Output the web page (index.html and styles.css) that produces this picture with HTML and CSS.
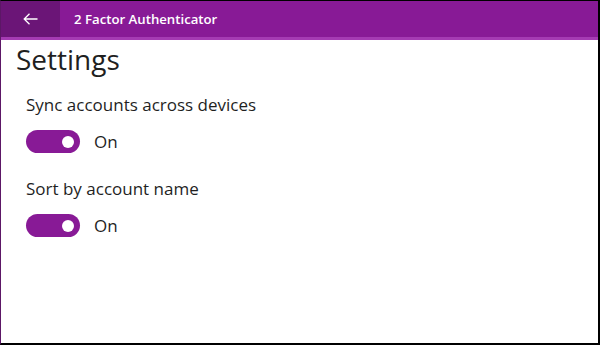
FILE: index.html
```html
<!DOCTYPE html>
<html lang="en">
<head>
    <meta charset="UTF-8">
    <title>2 Factor Authenticator - Settings</title>
    <link rel="stylesheet" href="styles.css">
</head>
<body>
    <div class="window">
        <div class="titlebar">
            <div class="back">
                <svg width="15" height="12" viewBox="0 0 15 12">
                    <path d="M14.5 6H1.2M6.5 0.8L1.2 6l5.3 5.2" fill="none" stroke="#fff" stroke-width="1.3"/>
                </svg>
            </div>
            <div class="app-title">2 Factor Authenticator</div>
        </div>
        <div class="content">
            <h1>Settings</h1>
            <div class="setting">
                <div class="label">Sync accounts across devices</div>
                <div class="toggle-row">
                    <span class="toggle"><span class="knob"></span></span>
                    <span class="state">On</span>
                </div>
            </div>
            <div class="setting">
                <div class="label">Sort by account name</div>
                <div class="toggle-row">
                    <span class="toggle"><span class="knob"></span></span>
                    <span class="state">On</span>
                </div>
            </div>
        </div>
    </div>
</body>
</html>
```

FILE: styles.css
```css
html, body {
    margin: 0;
    height: 100%;
}
body {
    font-family: "Open Sans", "Noto Sans", sans-serif;
    background-color: #fff;
}
.window {
    box-sizing: border-box;
    height: 345px;
    border-top: 1px solid #000;
    border-right: 2px solid #000;
    border-bottom: 2px solid #000;
    border-left: 1px solid #5c1766;
    display: flex;
    flex-direction: column;
}
.titlebar {
    display: flex;
    align-items: center;
    height: 36px;
    background-color: #881a96;
    border-bottom: 3px solid #a53bb3;
}
.back {
    width: 59px;
    height: 100%;
    background-color: #6b1577;
    display: flex;
    align-items: center;
    justify-content: center;
}
.back svg {
    margin-top: -1px;
}
.app-title {
    color: #fff;
    font-size: 13.2px;
    font-weight: 600;
    margin-left: 14px;
    margin-top: -1px;
}
.content {
    padding: 0 0 0 15px;
}
h1 {
    font-size: 28px;
    font-weight: 400;
    color: #1f1f1f;
    margin: 3px 0 0 0;
    line-height: 32px;
}
.setting {
    padding-left: 10px;
}
.label {
    font-size: 17px;
    color: #1f1f1f;
    line-height: 22px;
    margin-top: 19px;
}
.setting + .setting .label {
    margin-top: 25px;
}
.toggle-row {
    display: flex;
    align-items: center;
    gap: 14px;
    margin-top: 14px;
    height: 23px;
}
.toggle {
    width: 54px;
    height: 23px;
    border-radius: 12px;
    background-color: #881a96;
    display: flex;
    align-items: center;
    justify-content: flex-end;
    box-sizing: border-box;
    padding-right: 6px;
}
.knob {
    width: 12px;
    height: 12px;
    border-radius: 50%;
    background-color: #fff;
}
.state {
    font-size: 17px;
    line-height: 23px;
    color: #1f1f1f;
}
```
